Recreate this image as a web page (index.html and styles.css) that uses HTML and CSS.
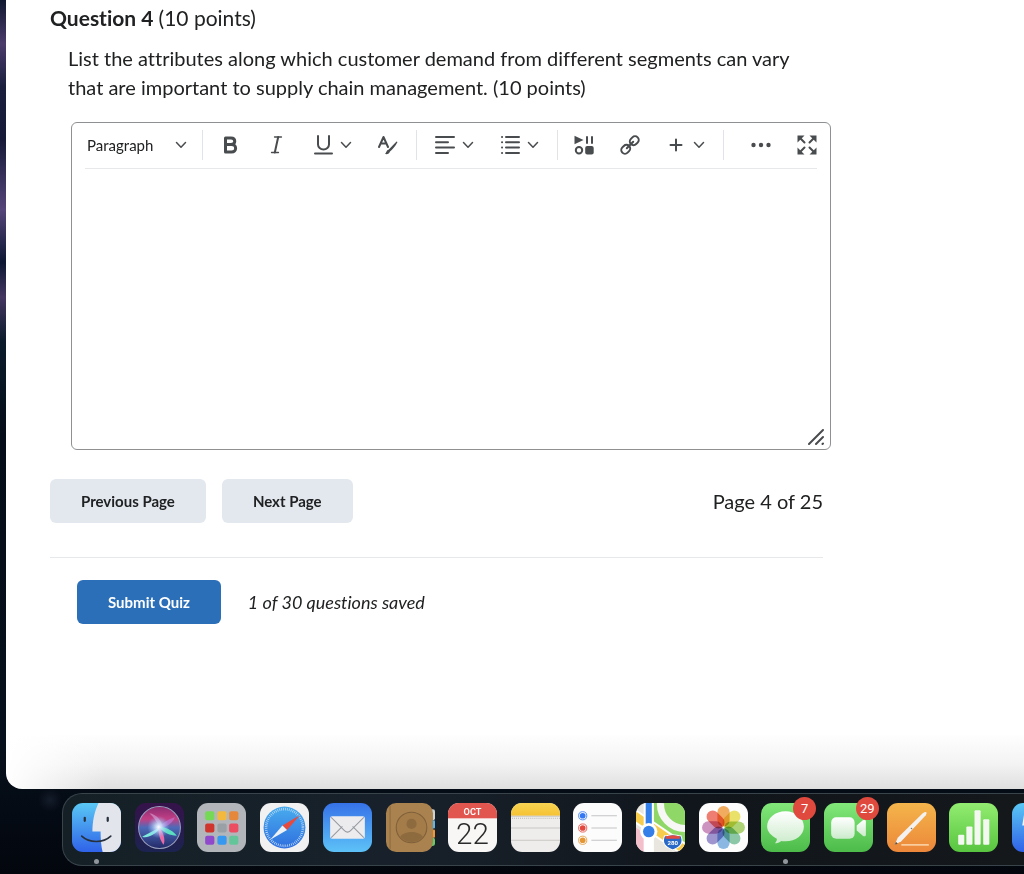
FILE: index.html
```
<!DOCTYPE html>
<html lang="en">
<head>
    <meta charset="UTF-8">
    <meta name="viewport" content="width=device-width, initial-scale=1.0">
    <title>Quiz</title>
    <link rel="stylesheet" href="styles.css">
</head>
<body>
    <main class="window">
        <div class="quiz">
            <h1 class="question-title">Question 4 <span>(10 points)</span></h1>
            <p class="question-text" id="questionText">List the attributes along which customer demand from different segments can vary that are important to supply chain management. (10 points)</p>

            <div class="editor">
                <div class="toolbar">
                    <div class="format">
                        <select aria-label="Format">
                            <option>Paragraph</option>
                            <option>Heading 1</option>
                        </select>
                        <svg class="chevron" viewBox="0 0 12 12"><path d="M1.500 3.500L6 8.200 10.500 3.500"/></svg>
                    </div>
                    <div class="group">
                        <button type="button" aria-label="Bold">
                            <svg class="icon" viewBox="0 0 20 20"><path class="thick" d="M4.500 3h5.500c5 0 5 6.500 0 6.500H4.500zM4.500 9.500h6c5.500 0 5.500 7.500 0 7.500h-6z"/></svg>
                        </button>
                        <button type="button" aria-label="Italic">
                            <svg class="icon" viewBox="0 0 20 20"><path class="thin" d="M7.500 2h7M4.500 17.500h7"/><path d="M11.200 2L7.800 17.500"/></svg>
                        </button>
                        <button type="button" class="split" aria-label="Underline">
                            <svg class="icon" viewBox="0 0 20 20"><path d="M5 1v8.500a5.500 5 0 0 0 11 0V1M2 18.500h17"/></svg>
                            <svg class="chevron" viewBox="0 0 12 12"><path d="M1.500 3.500L6 8.200 10.500 3.500"/></svg>
                        </button>
                        <button type="button" aria-label="Text color">
                            <svg class="icon" viewBox="0 0 20 20"><path d="M1 12L5.500 2 10 12M3 8.500h5"/><path class="fill" d="M19.500 7c-2 4-5 7.500-7.500 9.500-.5 2-2.500 3-5 2.500 1.500-1 1-3.500 3.500-4.200C13.500 12 16.500 8.500 18.500 6.500z"/></svg>
                        </button>
                    </div>
                    <div class="group">
                        <button type="button" class="split" aria-label="Alignment">
                            <svg class="icon" viewBox="0 0 20 20"><path d="M1 2h18M1 7.300h12M1 12.600h18M1 18h12"/></svg>
                            <svg class="chevron" viewBox="0 0 12 12"><path d="M1.500 3.500L6 8.200 10.500 3.500"/></svg>
                        </button>
                        <button type="button" class="split" aria-label="List">
                            <svg class="icon" viewBox="0 0 20 20"><path d="M6 2h13M6 7.300h13M6 12.600h13M6 18h13M2 2h.1M2 7.300h.1M2 12.600h.1M2 18h.1"/></svg>
                            <svg class="chevron" viewBox="0 0 12 12"><path d="M1.500 3.500L6 8.200 10.500 3.500"/></svg>
                        </button>
                    </div>
                    <div class="group inserts">
                        <button type="button" aria-label="Insert stuff">
                            <svg class="icon" viewBox="0 0 20 20"><path class="fill" d="M.5.800L9.500 5 .5 9.200z"/><path d="M13 2v6M18 2v6"/><circle cx="5" cy="15.200" r="3.200"/><rect class="fill" x="11.200" y="11" width="8.500" height="8.500" rx="2"/></svg>
                        </button>
                        <button type="button" aria-label="Quicklink">
                            <svg class="icon" viewBox="0 0 20 20"><g transform="rotate(-45 10 10)"><rect x="-.8" y="6.300" width="9.500" height="7.400" rx="3.700"/><rect x="11.300" y="6.300" width="9.500" height="7.400" rx="3.700"/><path d="M5.500 10h9"/></g></svg>
                        </button>
                        <button type="button" class="split" aria-label="Add">
                            <svg class="icon" viewBox="0 0 20 20"><path d="M10 4.500v11M4.500 10h11"/></svg>
                            <svg class="chevron" viewBox="0 0 12 12"><path d="M1.500 3.500L6 8.200 10.500 3.500"/></svg>
                        </button>
                    </div>
                    <div class="group last">
                        <button type="button" aria-label="More">
                            <svg class="icon" viewBox="0 0 20 20"><g class="fill"><circle cx="2.500" cy="10" r="2.200"/><circle cx="10" cy="10" r="2.200"/><circle cx="17.500" cy="10" r="2.200"/></g></svg>
                        </button>
                        <button type="button" aria-label="Fullscreen">
                            <svg class="icon" viewBox="0 0 20 20"><path class="fill" d="M.5.500h7l-7 7zM19.500.500h-7l7 7zM.5 19.500h7l-7-7zM19.500 19.500h-7l7-7z"/><path d="M3 3l4.500 4.500M17 3l-4.500 4.500M3 17l4.500-4.500M17 17l-4.500-4.500"/></svg>
                        </button>
                    </div>
                </div>
                <textarea aria-labelledby="questionText"></textarea>
                <svg class="grip" viewBox="0 0 16 16"><path d="M1 15L15 1M8 15l7-7M14.500 15l.5-.5"/></svg>
            </div>

            <div class="pager">
                <button type="button" class="btn">Previous Page</button>
                <button type="button" class="btn">Next Page</button>
                <span class="page-count">Page 4 of 25</span>
            </div>

            <div class="submit-row">
                <button type="submit" class="btn primary">Submit Quiz</button>
                <em>1 of 30 questions saved</em>
            </div>
        </div>
    </main>

    <nav class="dock" aria-label="Dock">
        <ul>
            <li class="running">
                <svg class="app" viewBox="0 0 48 48">
                    <defs><linearGradient id="gFinder" x2="0" y2="1"><stop stop-color="#5ac8f5"/><stop offset="1" stop-color="#2f62e8"/></linearGradient></defs>
                    <rect width="48" height="48" fill="url(#gFinder)"/>
                    <path d="M26 0h22v48H30c-1.500-6-2-13-2-20h-8C20 18 22 8 26 0z" fill="#e3e5ec"/>
                    <path d="M12.500 14.500v3M35 14.500v3" stroke="#27313d" stroke-width="2.200" stroke-linecap="round"/>
                    <path d="M9.500 32.500c7.500 7 21 7 28.500 0" fill="none" stroke="#27313d" stroke-width="1.600" stroke-linecap="round"/>
                </svg>
            </li>
            <li>
                <svg class="app" viewBox="0 0 48 48">
                    <defs>
                        <linearGradient id="gSiri" x2="0" y2="1"><stop stop-color="#35124a"/><stop offset="1" stop-color="#1c2350"/></linearGradient>
                        <linearGradient id="gOrb" x2="0" y2="1"><stop stop-color="#8a2c72"/><stop offset=".3" stop-color="#c23f84"/><stop offset=".5" stop-color="#4d6ab8"/><stop offset="1" stop-color="#232a68"/></linearGradient>
                        <radialGradient id="gGlow"><stop stop-color="#fff"/><stop offset=".3" stop-color="#cfe6ff" stop-opacity=".8"/><stop offset="1" stop-color="#8fb8ff" stop-opacity="0"/></radialGradient>
                    </defs>
                    <rect width="48" height="48" fill="url(#gSiri)"/>
                    <circle cx="24" cy="24" r="20.500" fill="url(#gOrb)" stroke="#9aa0bd" stroke-width="1"/>
                    <path d="M24 24c-3-6-6-11-10-14 7 1 12 7 13 13z" fill="#d8a5d8" opacity=".6"/>
                    <path d="M24 23c5-5 11-8 15-9-2 6-8 9-15 11z" fill="#c27bdf" opacity=".6"/>
                    <path d="M24 24L7 33c5 2 12-2 18-8z" fill="#7feadd"/>
                    <path d="M24 23c8 1 14 5 17 9-7 0-13-3-17-8z" fill="#5adfc0"/>
                    <path d="M23 24c0 8 2 13 5 17 2-5 0-12-4-17z" fill="#ea6aa8"/>
                    <circle cx="23" cy="23.500" r="11" fill="url(#gGlow)"/>
                </svg>
            </li>
            <li>
                <svg class="app" viewBox="0 0 48 48">
                    <rect width="48" height="48" fill="#b2b5b9"/>
                    <rect x="8" y="8" width="9" height="9" rx="2" fill="#75d955"/><rect x="20" y="8" width="9" height="9" rx="2" fill="#f2b93e"/><rect x="31.500" y="8" width="9" height="9" rx="2" fill="#e6883b"/>
                    <rect x="8" y="20" width="9" height="9" rx="2" fill="#cf352c"/><rect x="20" y="20" width="9" height="9" rx="2" fill="#9aa1a6"/><rect x="31.500" y="20" width="9" height="9" rx="2" fill="#ec4d61"/>
                    <rect x="8" y="32" width="9" height="9" rx="2" fill="#9149cb"/><rect x="20" y="32" width="9" height="9" rx="2" fill="#3698ef"/><rect x="31.500" y="32" width="9" height="9" rx="2" fill="#65c59a"/>
                </svg>
            </li>
            <li>
                <svg class="app" viewBox="0 0 48 48">
                    <defs><linearGradient id="gSafari" x2="0" y2="1"><stop stop-color="#48acee"/><stop offset="1" stop-color="#2f6fdf"/></linearGradient></defs>
                    <rect width="48" height="48" fill="#f1f1f2"/>
                    <circle cx="24" cy="24" r="20.500" fill="url(#gSafari)"/>
                    <circle cx="24" cy="24" r="18" fill="none" stroke="#c4dff7" stroke-width="2.500" stroke-dasharray=".7 1.186"/>
                    <path d="M39 12L26.500 26.500 22 22z" fill="#e8493d"/><path d="M10 36l12-14 4.500 4.500z" fill="#eef1f5"/>
                </svg>
            </li>
            <li>
                <svg class="app" viewBox="0 0 48 48">
                    <defs><linearGradient id="gMail" x2="0" y2="1"><stop stop-color="#3672e8"/><stop offset="1" stop-color="#5dc2f7"/></linearGradient></defs>
                    <rect width="48" height="48" fill="url(#gMail)"/>
                    <rect x="7" y="13" width="34" height="22" rx="2" fill="#ececef"/>
                    <path d="M8 34l11-11M40 34L29 23M8 14l13 13c2 2 4 2 6 0l13-13" fill="none" stroke="#96999e"/>
                </svg>
            </li>
            <li>
                <svg class="app contacts" viewBox="0 0 48 48">
                    <rect x="38" y="6" width="10" height="11" rx="2" fill="#cfd2d2"/><rect x="38" y="17" width="10" height="8" rx="1" fill="#5db7ea"/><rect x="38" y="26" width="10" height="8" rx="1" fill="#ee9839"/><rect x="38" y="34" width="10" height="8" rx="2" fill="#67c967"/>
                    <rect width="46" height="48" rx="10" fill="#a9824f"/>
                    <path d="M4 3v42" stroke="#8d6a3d"/>
                    <circle cx="25" cy="24" r="15" fill="#a37c49" stroke="#80603a"/>
                    <circle cx="25" cy="20.500" r="5" fill="#8e6b3f"/><path d="M14 33c4-6 18-6 22 0-5 7-17 7-22 0z" fill="#8e6b3f"/>
                </svg>
            </li>
            <li>
                <svg class="app" viewBox="0 0 48 48">
                    <rect width="48" height="48" fill="#f8f7f6"/><rect width="48" height="15" fill="#e1574f"/>
                    <text class="cal-month" x="24" y="11.500">OCT</text>
                    <text class="cal-day" x="24" y="40">22</text>
                </svg>
            </li>
            <li>
                <svg class="app" viewBox="0 0 48 48">
                    <defs><linearGradient id="gNotes" x2="0" y2="1"><stop stop-color="#f9d452"/><stop offset="1" stop-color="#f5c233"/></linearGradient></defs>
                    <rect width="48" height="48" fill="#efedeb"/><rect width="48" height="12.500" fill="url(#gNotes)"/>
                    <path d="M0 13h48M0 24.500h48M0 36.500h48" stroke="#c9c7c5"/><path d="M1 15h47" stroke="#aaa8a5" stroke-dasharray=".8 1.200"/>
                </svg>
            </li>
            <li>
                <svg class="app" viewBox="0 0 48 48">
                    <rect width="48" height="48" fill="#fcfcfc"/>
                    <path d="M18 12.500h25M18 24.500h25M18 36.500h25" stroke="#c4c4c6"/>
                    <g stroke-width=".8" fill="none"><circle cx="9.500" cy="12.500" r="4" stroke="#3478f6"/><circle cx="9.500" cy="24.500" r="4" stroke="#e5483e"/><circle cx="9.500" cy="36.500" r="4" stroke="#e59736"/></g>
                    <circle cx="9.500" cy="12.500" r="2.800" fill="#3478f6"/><circle cx="9.500" cy="24.500" r="2.800" fill="#e5483e"/><circle cx="9.500" cy="36.500" r="2.800" fill="#e59736"/>
                </svg>
            </li>
            <li>
                <svg class="app" viewBox="0 0 48 48">
                    <rect width="48" height="48" fill="#e9e6df"/>
                    <path d="M17 0h31v42L17 22z" fill="#8fd868"/>
                    <path d="M24 0a24 24 0 0 0 24 25" fill="none" stroke="#f7f7f5" stroke-width="7"/>
                    <path d="M0 24l8 6v18H0z" fill="#f3bfcb"/>
                    <path d="M-2 12l50 34" stroke="#fff" stroke-width="12"/><path d="M-2 12l50 34" stroke="#f7cb4b" stroke-width="8"/>
                    <path d="M12.500 0v48" stroke="#fff" stroke-width="10"/><path d="M12.500 0v28" stroke="#347fe8" stroke-width="6"/>
                    <circle cx="12.500" cy="28" r="8.500" fill="#fff"/><circle cx="12.500" cy="28" r="5.600" fill="#347fe8"/>
                    <path d="M28 32c3 0 5-1 8-1s5 1 8 1c3 7 0 11-8 14-8-3-11-7-8-14z" fill="#2868c8" stroke="#fff"/><path d="M29 32.500c3 0 4-.8 7-.8s4 .8 7 .8v2.500H29z" fill="#df4b43"/>
                    <text class="shield" x="36" y="41">280</text>
                </svg>
            </li>
            <li>
                <svg class="app" viewBox="0 0 48 48">
                    <rect width="48" height="48" fill="#fdfdfd"/>
                    <g class="petals">
                        <rect x="18" y="3" width="12" height="20" rx="6" fill="#f29a38"/>
                        <rect x="18" y="3" width="12" height="20" rx="6" fill="#e6dc45" transform="rotate(45 24 24)"/>
                        <rect x="18" y="3" width="12" height="20" rx="6" fill="#9ccb54" transform="rotate(90 24 24)"/>
                        <rect x="18" y="3" width="12" height="20" rx="6" fill="#70bb92" transform="rotate(135 24 24)"/>
                        <rect x="18" y="3" width="12" height="20" rx="6" fill="#6ea9df" transform="rotate(180 24 24)"/>
                        <rect x="18" y="3" width="12" height="20" rx="6" fill="#887bc4" transform="rotate(225 24 24)"/>
                        <rect x="18" y="3" width="12" height="20" rx="6" fill="#c278b3" transform="rotate(270 24 24)"/>
                        <rect x="18" y="3" width="12" height="20" rx="6" fill="#ed5d50" transform="rotate(315 24 24)"/>
                    </g>
                </svg>
            </li>
            <li class="running">
                <svg class="app" viewBox="0 0 48 48">
                    <defs>
                        <linearGradient id="gGreen" x2="0" y2="1"><stop stop-color="#82e87a"/><stop offset="1" stop-color="#4cbb49"/></linearGradient>
                        <linearGradient id="gWhite" x2="0" y2="1"><stop stop-color="#fff"/><stop offset="1" stop-color="#ccebcc"/></linearGradient>
                    </defs>
                    <rect width="48" height="48" fill="url(#gGreen)"/>
                    <path d="M24 8c10 0 18 6.500 18 15s-8 14.500-18 14.500c-1 0-3 0-4-.3-2 1.500-4 2.300-6.500 2.300 1.500-1.500 2.200-3 2-4.500C10 32 6 28 6 23 6 14.500 14 8 24 8z" fill="url(#gWhite)"/>
                </svg>
                <span class="badge">7</span>
            </li>
            <li>
                <svg class="app" viewBox="0 0 48 48">
                    <rect width="48" height="48" fill="url(#gGreen)"/>
                    <rect x="7" y="14" width="23" height="21" rx="5" fill="url(#gWhite)"/><path d="M32 22l6-5c1.500-1.200 3-.5 3 1v13c0 1.500-1.500 2.200-3 1l-6-5z" fill="url(#gWhite)"/>
                </svg>
                <span class="badge">29</span>
            </li>
            <li>
                <svg class="app" viewBox="0 0 48 48">
                    <defs><linearGradient id="gPages" x2="0" y2="1"><stop stop-color="#f4b54b"/><stop offset="1" stop-color="#ec873a"/></linearGradient></defs>
                    <rect width="48" height="48" fill="url(#gPages)"/>
                    <path d="M14 41h27" stroke="#f9cd9d" stroke-width="1.800"/>
                    <path d="M7.500 41l3-7L35 10c3-2 5-1.500 3 2L14 37.500z" fill="#f3f2f1"/><path d="M7.500 41l1.300-3 1.800 1.800z" fill="#5d5146"/><circle cx="24" cy="25" r=".8" fill="#777"/>
                </svg>
            </li>
            <li>
                <svg class="app" viewBox="0 0 48 48">
                    <defs><linearGradient id="gNumbers" x2="0" y2="1"><stop stop-color="#92ec70"/><stop offset="1" stop-color="#58c540"/></linearGradient></defs>
                    <rect width="48" height="48" fill="url(#gNumbers)"/>
                    <g fill="#f3f8f1"><rect x="9" y="31" width="6" height="10" rx="1"/><rect x="17" y="23" width="6" height="18" rx="1"/><rect x="25" y="7" width="6" height="34" rx="1"/><rect x="33.500" y="16" width="6" height="25" rx="1"/></g>
                </svg>
            </li>
            <li>
                <svg class="app" viewBox="0 0 48 48">
                    <rect width="48" height="48" fill="url(#gFinder)"/>
                    <path d="M12 10h24v12H10z" fill="#f2f6fa"/>
                </svg>
            </li>
        </ul>
    </nav>
</body>
</html>
```
FILE: styles.css
```
* {
    margin: 0;
    padding: 0;
    box-sizing: border-box;
}

body {
    font-family: Lato, 'Liberation Sans', sans-serif;
    font-size: 20px;
    font-variant-ligatures: none;
    color: #202122;
    min-height: 100vh;
    display: flex;
    flex-direction: column;
    overflow-x: hidden;
    background:
        radial-gradient(circle at 50px 800px, #141c2a, transparent 12px),
        linear-gradient(#101830, #4a3b6b 5%, #1a1f3d 10%, #161a38 16%, #55457a 24%, #0c1733 30%, #443660 34%, #0b1b2b 39%, #050d18 50%, #06101c 85%, #03060d);
}

button,
select,
textarea {
    font-family: inherit;
    font-variant-ligatures: none;
    color: inherit;
    border: none;
    background: none;
}

button {
    cursor: pointer;
}

.window {
    flex: 1;
    margin-left: 6px;
    padding: 4px 24px 24px 44px;
    border-bottom-left-radius: 16px;
    background:
        linear-gradient(90deg, #fff, rgba(255, 255, 255, 0) 100px),
        linear-gradient(0deg, #dfdfdf, #f3f3f3 25px, #fff 56px);
}

.quiz {
    max-width: 773px;
}

.question-title {
    font-size: 21px;
    line-height: 28px;
    font-weight: 700;
}

.question-title span {
    font-weight: 400;
}

.question-text {
    margin: 12px 0 20px 18px;
    line-height: 29px;
}

/* editor */
.editor {
    position: relative;
    margin: 0 -8px 0 21px;
    border: 1px solid #8e9092;
    border-radius: 6px;
}

.toolbar {
    display: flex;
    align-items: center;
    height: 46px;
    margin: 0 13px;
    padding-bottom: 2px;
    border-bottom: 1px solid #e6e8ea;
}

.format {
    display: flex;
    align-items: center;
    width: 117px;
}

.format select {
    appearance: none;
    width: 102px;
    height: 30px;
    padding-left: 2px;
    margin-right: -12px;
    font-size: 15px;
}

.format .chevron {
    pointer-events: none;
}

.group {
    display: flex;
    align-items: center;
    gap: 26px;
    height: 30px;
    padding: 0 18px;
    border-left: 1px solid #e0e4e8;
}

.group.inserts {
    padding-left: 16px;
}

.group.last {
    flex: 1;
    justify-content: flex-end;
    padding-right: 0;
}

.group button {
    display: flex;
    align-items: center;
    gap: 7px;
}

.icon,
.chevron,
.grip {
    width: 20px;
    height: 20px;
    fill: none;
    stroke: #494c4e;
    stroke-width: 2;
    stroke-linecap: round;
    stroke-linejoin: round;
}

.chevron {
    width: 12px;
    height: 12px;
    stroke-width: 1.5;
}

.icon .fill {
    fill: #494c4e;
    stroke: none;
}

.icon .thick {
    stroke-width: 3;
}

.icon .thin {
    stroke-width: 1.3;
}

.editor textarea {
    display: block;
    width: 100%;
    height: 280px;
    padding: 12px;
    font-size: 20px;
    resize: none;
    outline: none;
}

.grip {
    position: absolute;
    right: 6px;
    bottom: 4px;
    width: 16px;
    height: 16px;
}

/* buttons under the editor */
.btn {
    height: 44px;
    padding: 0 31px;
    border-radius: 6px;
    background: #e3e8ef;
    font-size: 15px;
    font-weight: 700;
}

.btn.primary {
    background: #2b6fb8;
    color: #fff;
}

.pager {
    display: flex;
    align-items: center;
    gap: 16px;
    padding: 29px 0 34px;
    border-bottom: 1px solid #e6e8ea;
}

.page-count {
    margin-left: auto;
}

.submit-row {
    display: flex;
    align-items: center;
    gap: 27px;
    padding: 22px 0 0 27px;
    font-size: 18px;
}

/* dock */
.dock {
    margin: 4px 0 8px 62px;
    padding: 9px 0 0 9px;
    height: 73px;
    border: 1px solid #38434a;
    border-right: none;
    border-radius: 20px 0 0 20px;
    background: linear-gradient(90deg, #142026, #18212b 35%, #11161c 65%, #14181b);
}

.dock ul {
    display: flex;
    justify-content: space-between;
    margin-right: -37px;
    list-style: none;
}

.dock li {
    position: relative;
    flex: none;
}

.app {
    display: block;
    width: 49px;
    height: 49px;
    border-radius: 11px;
}

.app.contacts {
    width: 51px;
    margin-right: -2px;
    border-radius: 0;
}

.running::after {
    content: '';
    position: absolute;
    left: 22px;
    bottom: -12px;
    width: 5px;
    height: 5px;
    border-radius: 50%;
    background: #91969c;
}

.badge {
    position: absolute;
    top: -6px;
    right: -6px;
    width: 23px;
    height: 23px;
    border-radius: 50%;
    background: #e04a3e;
    color: #fff;
    font: 13px/23px Roboto, sans-serif;
    text-align: center;
}

.cal-month,
.cal-day,
.shield {
    text-anchor: middle;
    font-family: Roboto, sans-serif;
}

.cal-month {
    font-size: 9px;
    font-weight: 600;
    fill: #fff;
}

.cal-day {
    font-size: 29px;
    font-weight: 300;
    fill: #2b2b2b;
}

.shield {
    font-size: 6px;
    font-weight: 700;
    fill: #fff;
}

.petals rect {
    mix-blend-mode: multiply;
    opacity: 0.8;
}
```
